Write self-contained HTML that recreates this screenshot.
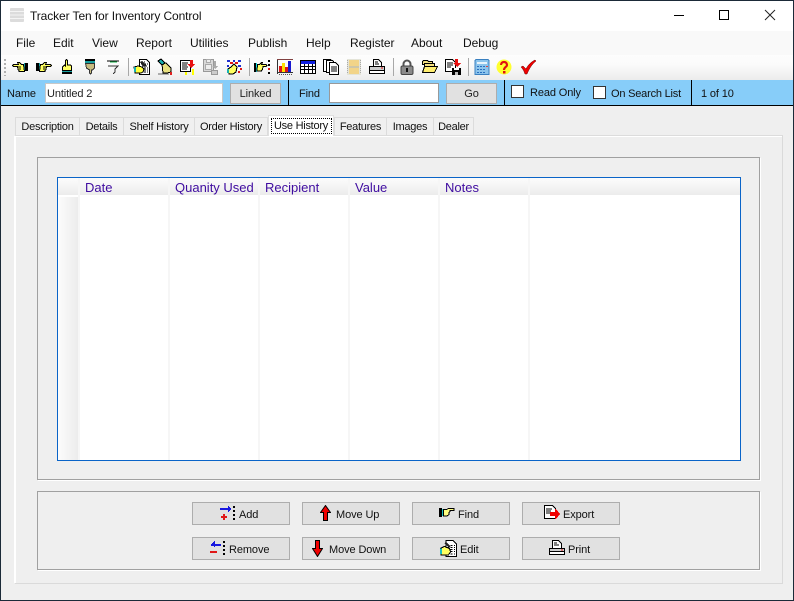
<!DOCTYPE html>
<html><head><meta charset="utf-8"><style>
html,body{margin:0;padding:0;width:794px;height:601px;overflow:hidden;background:#efefef}
body{font-family:"Liberation Sans",sans-serif;font-size:12px;color:#000;position:relative}
div,span,svg{position:absolute;box-sizing:border-box}
.t{white-space:nowrap;line-height:14px}
.m{top:36px;font-size:12px;color:#111;letter-spacing:-.02px}
.s{font-size:11px;letter-spacing:-.12px;color:#111}
.tab{top:117px;height:18px;background:#f0f0f0;border:1px solid #dcdcdc;border-bottom:0;text-align:center;line-height:19px;font-size:11px;letter-spacing:-.26px;color:#111;white-space:nowrap}
.g{border:1px solid #a0a0a0;box-shadow:1px 1px 0 #fff}
.b{width:98px;height:23px;background:#e1e1e1;border:1px solid #adadad}
.bt{font-size:11px;letter-spacing:-.1px;color:#111;white-space:nowrap;line-height:14px}
.ic{width:16px;height:16px;top:59px;shape-rendering:crispEdges;overflow:visible}
.sep{top:58px;width:1px;height:18px;background:#a8a8a8}
.h{top:180px;font-size:13px;color:#3f0ca0;line-height:15px;white-space:nowrap}
.cl{top:178px;width:2px;height:282px;background:#f6f6f6}
.bar{top:80px;width:1px;height:25px;background:#000}
</style></head><body>
<svg width="0" height="0" style="left:0;top:0"><defs>
<g id="hand"><path d="M0 4h3v8H0z" fill="#000"/><path d="M3 4h1v8H3z" fill="#18a0a0"/><path d="M4.500 5.500h2l2-2h2l-1 2h5l1 1-1 1h-4v1l-.5 1v1l-1 1v1h-5.500z" fill="#ffff60" stroke="#000"/><path d="M7 8h3M7 10h2" stroke="#000"/></g>
<g id="doc"><path d="M5.500 .5h7l3 3v12h-10z" fill="#fff" stroke="#000"/><path d="M7 3h4M7 5h7M8 7h6M10 9h4M10 11h4M7 13h7" stroke="#000" stroke-dasharray="2 1"/></g>
<g id="pencilhand"><path d="M0 8l4-1 4 1 2 2-1 3-2 1H1z" fill="#ffff40" stroke="#000"/><path d="M0 8h2v5H0z" fill="#18b0b0"/><path d="M6 3l2-1 4 4-2 2z" fill="#222"/></g>
</defs></svg>

<!-- window frame -->
<div style="left:0;top:0;width:794px;height:601px;background:#efefef"></div>
<div style="left:1px;top:1px;width:792px;height:30px;background:#fff"></div>
<svg style="left:10px;top:8px" width="16" height="16"><path d="M0 1q0-1 1-1h12q1 0 1 1v12q0 1-1 1H1q-1 0-1-1z" fill="#dcdcdc"/><path d="M0 3.500h14M0 7h14M0 10.500h14" stroke="#f4f4f4"/></svg>
<div class="t" style="left:30px;top:9px;font-size:12px;letter-spacing:-.1px;color:#111">Tracker Ten for Inventory Control</div>
<svg style="left:670px;top:8px;shape-rendering:crispEdges" width="110" height="16"><path d="M4 7.500h10" stroke="#000"/><path d="M49.500 2.500h9v9h-9z" fill="none" stroke="#000"/></svg>
<svg style="left:764px;top:9px" width="12" height="12"><path d="M1 1l10 10M11 1L1 11" stroke="#222" stroke-width="1"/></svg>

<!-- menu -->
<div style="left:1px;top:31px;width:792px;height:24px;background:#f9f9f9"></div>
<div class="t m" style="left:16px">File</div>
<div class="t m" style="left:53px">Edit</div>
<div class="t m" style="left:92px">View</div>
<div class="t m" style="left:136px">Report</div>
<div class="t m" style="left:190px">Utilities</div>
<div class="t m" style="left:248px">Publish</div>
<div class="t m" style="left:306px">Help</div>
<div class="t m" style="left:350px">Register</div>
<div class="t m" style="left:411px">About</div>
<div class="t m" style="left:463px">Debug</div>

<!-- toolbar -->
<div style="left:1px;top:55px;width:792px;height:25px;background:linear-gradient(#fdfdfd,#fbfbfb 40%,#ececec)"></div>
<div style="left:4px;top:59px;width:2px;height:17px;background:repeating-linear-gradient(#b0b0b0 0 2px,transparent 2px 4px)"></div>

<svg class="ic" style="left:12px" viewBox="0 0 16 16"><g transform="translate(16 0) scale(-1 1)"><use href="#hand"/></g></svg>
<svg class="ic" style="left:36px" viewBox="0 0 16 16"><use href="#hand"/></svg>
<svg class="ic" style="left:59px" viewBox="0 0 16 16"><path d="M3 13h10v2H3z" fill="#000"/><path d="M3 12h10v1H3z" fill="#18a0a0"/><path d="M3.500 11.500V8l2-2 1 1V1.500l1-1 1 1V6h3l1 1v4.500z" fill="#ffff60" stroke="#000"/></svg>
<svg class="ic" style="left:82px" viewBox="0 0 16 16"><path d="M3 0h10v2H3z" fill="#000"/><path d="M3 2h10v2H3z" fill="#18a0a0"/><path d="M3.500 4.500h9V9l-2 2h-1v3l-1 1-1-1v-3l-3-2z" fill="#c8bc80" stroke="#333"/></svg>
<svg class="ic" style="left:105px" viewBox="0 0 16 16"><path d="M2 2h12" stroke="#000"/><path d="M5 3h7" stroke="#1ab04a"/><path d="M3 7h10l-3 3v3l-2 2" fill="none" stroke="#333"/></svg>
<div class="sep" style="left:128px"></div>
<svg class="ic" style="left:134px" viewBox="0 0 16 16"><use href="#doc"/><use href="#pencilhand"/></svg>
<svg class="ic" style="left:157px" viewBox="0 0 16 16"><path d="M5 5l4-1 5 5v4l-4 1H6z" fill="#e8e080" stroke="#000"/><path d="M1 2l3-2 4 4-3 2z" fill="#18b0b0" stroke="#000"/><path d="M1 15h11" stroke="#666"/><path d="M13 13h2v3h-2z" fill="#e02020"/></svg>
<svg class="ic" style="left:180px" viewBox="0 0 16 16"><path d="M.5 1.500h10v11H.5z" fill="#fff" stroke="#000"/><path d="M2 4h6M2 6h5M2 8h6M2 10h5" stroke="#000"/><path d="M10 1h3v4h2l-4 4-4-4h3z" fill="#e81010"/><path d="M5 13h2v3H5zM12 10h2v6h-2z" fill="#ffff00"/></svg>
<svg class="ic" style="left:203px" viewBox="0 0 16 16"><path d="M.5 .5h10v12H.5z" fill="#d8d8d8" stroke="#999"/><path d="M3.500 .5h4v3h-4zM2.500 5.500h6v5h-6z" fill="#eee" stroke="#aaa"/><path d="M11 2h2v5h2l-3 3-3-3h2z" fill="#aaa"/><path d="M8.500 11.500h6v4h-6z" fill="#ccc" stroke="#999"/></svg>
<svg class="ic" style="left:226px" viewBox="0 0 16 16"><path d="M1 1h3v2H1zM7 1h2v2H7zM12 1h3v2h-3zM1 6h2v2H1zM12 6h3v2h-3z" fill="#2030d0"/><path d="M4 3h3v2H4zM9 3h3v2H9zM14 9h2v2h-2zM12 12h2v2h-2z" fill="#e01818"/><path d="M2 10l3-2 3-3 3 3-1 5-3 2H3z" fill="#ffff60" stroke="#000"/><path d="M1 10h2v4H1z" fill="#18b0b0"/></svg>
<div class="sep" style="left:249px"></div>
<svg class="ic" style="left:254px" viewBox="0 0 16 16"><path d="M0 4h2v9H0z" fill="#000"/><path d="M2 4h1v9H2z" fill="#18e0e0"/><path d="M3.500 5.500h2l2-2h1l-1 2h4.500l1 1-1 1h-3v1l-.5 1v1l-1 1v.5h-4.500z" fill="#ffff60" stroke="#000"/><path d="M14 1h2v2h-2zM14 5h2v2h-2zM14 13h2v2h-2z" fill="#000"/><path d="M14 9h2v2h-2z" fill="#e01818"/></svg>
<svg class="ic" style="left:277px" viewBox="0 0 16 16"><path d="M.5 0v15M0 13.500h16" fill="none" stroke="#333"/><path d="M0 .5h16" stroke="#804040"/><path d="M2 15.500h14" stroke="#555" stroke-dasharray="1 1"/><path d="M2 7h3v6H2z" fill="#e01818"/><path d="M5 4h3v9H5z" fill="#ffe000"/><path d="M8 8h3v5H8z" fill="#e01818"/><path d="M11 2h3v11h-3z" fill="#1818d0"/></svg>
<svg class="ic" style="left:300px" viewBox="0 0 16 16"><path d="M.5 1.500h15v13H.5z" fill="#fff" stroke="#000"/><path d="M1 2h14v3H1z" fill="#1020e0"/><path d="M1 7.500h14M1 10.500h14M4.500 5v9M8.500 5v9M12.500 5v9" stroke="#000"/></svg>
<svg class="ic" style="left:323px" viewBox="0 0 16 16"><path d="M.5 .5h7l1 1v11h-8z" fill="#fff" stroke="#000"/><path d="M3.500 1.500h6l1 1v11h-7z" fill="#fff" stroke="#000"/><path d="M6.500 3.500h6l3 3v9h-9z" fill="#fff" stroke="#000"/><path d="M8 8h6M8 10h6M8 12h6" stroke="#000"/></svg>
<svg class="ic" style="left:346px" viewBox="0 0 16 16"><path d="M1 0h14v16H1z" fill="#e4e4d8"/><path d="M3 1h10v6H3zM3 9h10v6H3z" fill="#f2d488"/><path d="M3 8h10" stroke="#b8a878"/><path d="M1.500 1v14M14.500 1v14" stroke="#aaa" stroke-dasharray="1 1"/></svg>
<svg class="ic" style="left:369px" viewBox="0 0 16 16"><path d="M4.500 .5h5l3 3v4h-8z" fill="#fff" stroke="#000"/><path d="M6 3h3M6 5h4" stroke="#000"/><path d="M.5 7.500h15v4H.5z" fill="#ccc" stroke="#000"/><path d="M.5 11.500h15v3H.5z" fill="#fff" stroke="#000"/><path d="M12 9h2" stroke="#e01818"/></svg>
<div class="sep" style="left:393px"></div>
<svg class="ic" style="left:399px;shape-rendering:auto" viewBox="0 0 16 16"><path d="M4.500 8V5a3.500 3.500 0 0 1 7 0v3" fill="none" stroke="#555" stroke-width="2"/><rect x="2" y="7" width="12" height="8.500" rx="1.500" fill="#8a8a8a" stroke="#444"/><path d="M7 9h2v4H7z" fill="#111"/></svg>
<svg class="ic" style="left:422px" viewBox="0 0 16 16"><path d="M.5 2.500l1-1h4l1 1h4v3h-10z" fill="#f4e080" stroke="#000"/><path d="M2.500 4.500h10v3h-10z" fill="#f4e080" stroke="#000"/><path d="M.5 13.500l2-6h13l-3 6z" fill="#ffee70" stroke="#000"/></svg>
<svg class="ic" style="left:445px" viewBox="0 0 16 16"><path d="M.5 .5h7l3 3v9h-10z" fill="#fff" stroke="#000"/><path d="M2 4h6M2 6h6M2 8h4" stroke="#000"/><path d="M10 0h3v4h3l-4 4-4-4h2z" fill="#e81010"/><path d="M7 9h9v7H7z" fill="#000"/><path d="M9 9h5v2H9z" fill="#fff"/><path d="M10 13h3v3h-3z" fill="#bbb"/></svg>
<div class="sep" style="left:468px"></div>
<svg class="ic" style="left:474px" viewBox="0 0 16 16"><path d="M2 .5h12l1 1v14H1v-14z" fill="#8cc4ec" stroke="#3a80c0"/><path d="M3 3h10v2H3z" fill="#e8f4fc"/><path d="M3 7h2v1H3zM6 7h2v1H6zM9 7h2v1H9zM3 10h2v1H3zM6 10h2v1H6zM9 10h2v1H9zM3 13h2v1H3zM6 13h2v1H6zM9 13h2v1H9z" fill="#2a70c0"/><path d="M12 7h2v1h-2z" fill="#e04040"/></svg>
<svg class="ic" style="left:496px;shape-rendering:auto" viewBox="0 0 16 16"><circle cx="8" cy="8" r="7.500" fill="#ffff30"/><path d="M5 6c0-4 6-4 6 0 0 2-3 2-3 5" fill="none" stroke="#e01010" stroke-width="2.200"/><path d="M7 12h2.500v2.500H7z" fill="#e01010"/></svg>
<svg class="ic" style="left:520px;shape-rendering:auto" viewBox="0 0 16 16"><path d="M1 8l2-1 3 3c2-4 5-7 9-9l1 1c-4 3-7 8-9 13H5C4 12 3 10 1 8z" fill="#f00000" stroke="#600" stroke-width=".5"/></svg>

<!-- blue bar -->
<div style="left:1px;top:80px;width:792px;height:26px;background:#87cdf9;border-bottom:1px solid #000"></div>
<div class="t s" style="left:7px;top:87px">Name</div>
<div style="left:45px;top:83px;width:178px;height:20px;background:#fff;border:1px solid #c8c8c8"></div>
<div class="t s" style="left:47px;top:87px;color:#222">Untitled 2</div>
<div class="s" style="left:230px;top:83px;width:51px;height:21px;background:#e1e1e1;border:1px solid #adadad;text-align:center;line-height:21px;color:#222">Linked</div>
<div class="bar" style="left:288px"></div>
<div class="t s" style="left:299px;top:87px">Find</div>
<div style="left:329px;top:83px;width:110px;height:20px;background:#fff;border:1px solid #999"></div>
<div class="s" style="left:446px;top:83px;width:51px;height:21px;background:#e1e1e1;border:1px solid #adadad;text-align:center;line-height:21px;color:#222">Go</div>
<div class="bar" style="left:504px"></div>
<div style="left:511px;top:85px;width:13px;height:13px;background:#fff;border:1px solid #333"></div>
<div class="t s" style="left:530px;top:86px">Read Only</div>
<div style="left:593px;top:86px;width:13px;height:13px;background:#fff;border:1px solid #333"></div>
<div class="t s" style="left:611px;top:87px;letter-spacing:-.2px">On Search List</div>
<div class="bar" style="left:691px"></div>
<div class="t s" style="left:701px;top:87px">1 of 10</div>

<!-- tabs & panel -->
<div style="left:14px;top:135px;width:769px;height:449px;background:#efefef;border:1px solid #dadada;border-top:1px solid #dcdcdc;border-left-color:#fff;box-shadow:inset 1px 1px 0 #fff"></div>
<div class="tab" style="left:15px;width:65px">Description</div>
<div class="tab" style="left:79px;width:45px">Details</div>
<div class="tab" style="left:123px;width:72px">Shelf History</div>
<div class="tab" style="left:194px;width:74px">Order History</div>
<div class="tab" style="left:268px;top:115px;width:66px;height:21px;background:#fff;border:1px solid #e0e0e0;border-bottom:0;line-height:20px;z-index:2"><span style="left:2px;top:2px;width:61px;height:16px;border:1px dotted #000"></span>Use History</div>
<div class="tab" style="left:334px;width:53px">Features</div>
<div class="tab" style="left:386px;width:48px">Images</div>
<div class="tab" style="left:433px;width:41px">Dealer</div>

<!-- groups -->
<div class="g" style="left:37px;top:157px;width:723px;height:323px"></div>
<div class="g" style="left:37px;top:491px;width:723px;height:79px"></div>

<!-- grid -->
<div style="left:57px;top:177px;width:684px;height:284px;background:#fff;border:1px solid #0a64c8"></div>
<div style="left:58px;top:178px;width:682px;height:17px;background:linear-gradient(#fcfcfc,#ececec)"></div>
<div style="left:58px;top:197px;width:20px;height:263px;background:linear-gradient(90deg,#fcfcfc,#ececec)"></div>
<div class="cl" style="left:78px"></div>
<div class="cl" style="left:168px"></div>
<div class="cl" style="left:258px"></div>
<div class="cl" style="left:348px"></div>
<div class="cl" style="left:438px"></div>
<div class="cl" style="left:528px"></div>
<div class="h" style="left:85px">Date</div>
<div class="h" style="left:175px">Quanity Used</div>
<div class="h" style="left:265px">Recipient</div>
<div class="h" style="left:355px">Value</div>
<div class="h" style="left:445px">Notes</div>

<!-- buttons -->
<div class="b" style="left:192px;top:502px"></div>
<div class="b" style="left:302px;top:502px"></div>
<div class="b" style="left:412px;top:502px"></div>
<div class="b" style="left:522px;top:502px"></div>
<div class="b" style="left:192px;top:537px"></div>
<div class="b" style="left:302px;top:537px"></div>
<div class="b" style="left:412px;top:537px"></div>
<div class="b" style="left:522px;top:537px"></div>
<div class="bt" style="left:239px;top:508px">Add</div>
<div class="bt" style="left:336px;top:508px">Move Up</div>
<div class="bt" style="left:458px;top:508px">Find</div>
<div class="bt" style="left:563px;top:508px">Export</div>
<div class="bt" style="left:229px;top:543px">Remove</div>
<div class="bt" style="left:329px;top:543px">Move Down</div>
<div class="bt" style="left:460px;top:543px">Edit</div>
<div class="bt" style="left:568px;top:543px">Print</div>

<svg style="left:220px;top:505px;shape-rendering:crispEdges" width="16" height="16"><path d="M0 3h10v2H0z" fill="#1818e0"/><path d="M8 1h1v1h1v1h1v2h-1v1H9v1H8z" fill="#1818e0"/><path d="M3 9h2v2h2v2H5v2H3v-2H1v-2h2z" fill="#e01818"/><path d="M13 1h2v2h-2zM13 5h2v2h-2zM13 9h2v2h-2zM13 13h2v2h-2z" fill="#000"/></svg>
<svg style="left:320px;top:505px;shape-rendering:auto" width="11" height="17"><path d="M5.500 .5l5 7H7.500v8h-4v-8H.5z" fill="#f00000" stroke="#000"/></svg>
<svg style="left:439px;top:506px;shape-rendering:crispEdges" width="16" height="14"><path d="M0 2h3v9H0z" fill="#000"/><path d="M3 3h1v7H3z" fill="#18c0c0"/><path d="M4.500 3.500h3l2-1h5.500v2h-4v1l-1 1v2l-2 1.500h-3.500z" fill="#ffff80" stroke="#000"/></svg>
<svg style="left:544px;top:505px;shape-rendering:crispEdges" width="16" height="16"><path d="M.5 .5h8l3 3v10h-11z" fill="#fff" stroke="#000"/><path d="M2 4h6M2 6h5M2 8h4" stroke="#000"/><path d="M6 7h5V4h1l4 5-4 5h-1v-3H6z" fill="#f00000"/></svg>
<svg style="left:210px;top:540px;shape-rendering:crispEdges" width="16" height="16"><path d="M1 4h10v2H1z" fill="#1818e0"/><path d="M5 1h-1v1H3v1H2v2h1v1h1v1h1z" fill="#1818e0"/><path d="M0 11h7v2H0z" fill="#e01818"/><path d="M13 1h2v2h-2zM13 5h2v2h-2zM13 9h2v2h-2zM13 13h2v2h-2z" fill="#000"/></svg>
<svg style="left:312px;top:540px;shape-rendering:auto" width="11" height="17"><path d="M3.500 .5h4v8h3l-5 8-5-8h3z" fill="#f00000" stroke="#000"/></svg>
<svg style="left:440px;top:539px;shape-rendering:crispEdges" width="17" height="18" viewBox="0 0 16 17"><path d="M5.500 1.500h7l3 3v12h-10z" fill="#fff" stroke="#000"/><path d="M7 6h7M7 8h7M7 10h7M7 12h7M7 14h7" stroke="#000" stroke-dasharray="2 1"/><path d="M0 9l4-2 5 2 1 3-2 3H1z" fill="#ffff60" stroke="#000"/><path d="M0 9h2v5H0z" fill="#18c0c0"/><path d="M4 4l2-1 4 4-2 1z" fill="#222"/></svg>
<svg style="left:549px;top:540px;shape-rendering:crispEdges" width="16" height="16"><path d="M3.500 .5h6l3 3v5h-9z" fill="#fff" stroke="#000"/><path d="M5 3h3M5 5h5" stroke="#000"/><path d="M.5 8.500h15v3H.5z" fill="#ccc" stroke="#000"/><path d="M.5 11.500h15v3H.5z" fill="#fff" stroke="#000"/><path d="M12 10h2" stroke="#e01818"/></svg>

<!-- frame border -->
<div style="left:0;top:0;width:794px;height:601px;border:1px solid #1b2a38;z-index:9;pointer-events:none"></div>
</body></html>
